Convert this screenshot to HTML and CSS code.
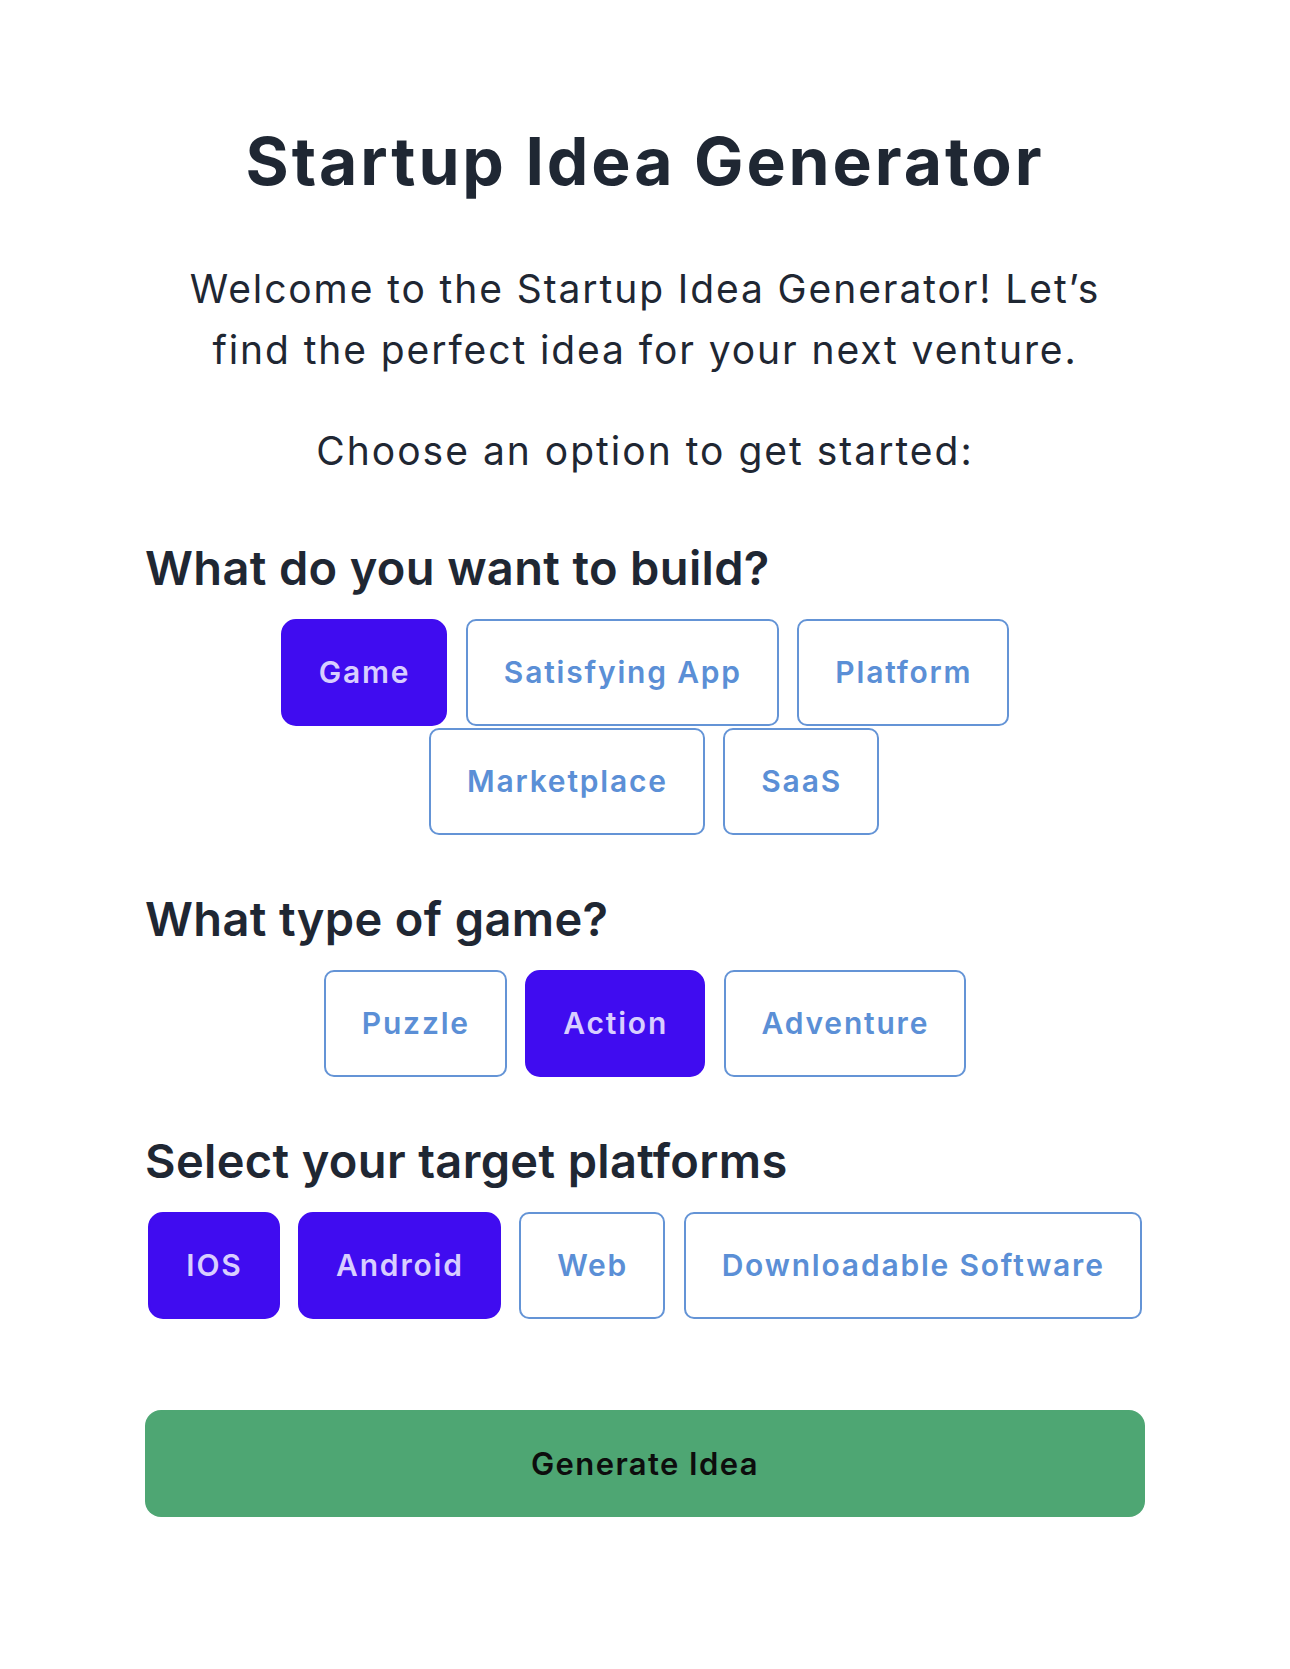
FILE: index.html
```html
<!DOCTYPE html>
<html lang="en">
<head>
<meta charset="utf-8">
<title>Startup Idea Generator</title>
<link rel="stylesheet" href="styles.css">
</head>
<body>
<main class="app">
  <h1 class="title">Startup Idea Generator</h1>
  <p class="intro">Welcome to the Startup Idea Generator! Let’s find the perfect idea for your next venture.</p>
  <p class="prompt">Choose an option to get started:</p>

  <section class="section">
    <h2 class="question">What do you want to build?</h2>
    <div class="options options-build">
      <button class="option selected">Game</button>
      <button class="option">Satisfying App</button>
      <button class="option">Platform</button>
      <button class="option">Marketplace</button>
      <button class="option">SaaS</button>
    </div>
  </section>

  <section class="section">
    <h2 class="question">What type of game?</h2>
    <div class="options">
      <button class="option">Puzzle</button>
      <button class="option selected">Action</button>
      <button class="option">Adventure</button>
    </div>
  </section>

  <section class="section">
    <h2 class="question">Select your target platforms</h2>
    <div class="options">
      <button class="option selected">IOS</button>
      <button class="option selected">Android</button>
      <button class="option">Web</button>
      <button class="option">Downloadable Software</button>
    </div>
  </section>

  <button class="generate">Generate Idea</button>
</main>
</body>
</html>
```

FILE: styles.css
```css
html, body {
  margin: 0;
  padding: 0;
  background: #ffffff;
}

body {
  font-family: "Inter", "Noto Sans", sans-serif;
  color: #1f2733;
}

.app {
  width: 1000px;
  margin: 0 auto;
  padding-top: 122px;
  padding-bottom: 100px;
  display: flex;
  flex-direction: column;
}

.title {
  margin: 0;
  font-size: 66px;
  line-height: 79px;
  font-weight: 700;
  letter-spacing: 2.9px;
  text-align: center;
  color: #1f2733;
}

.intro {
  margin: 57px auto 0;
  max-width: 940px;
  font-size: 39px;
  line-height: 61px;
  font-weight: 400;
  letter-spacing: 1.9px;
  text-align: center;
}

.prompt {
  margin: 40px 0 0;
  font-size: 39px;
  line-height: 61px;
  font-weight: 400;
  letter-spacing: 2px;
  text-align: center;
}

.section {
  margin-top: 56px;
}

.section:first-of-type {
  margin-top: 59px;
}

.question {
  margin: 0 0 23px;
  font-size: 47px;
  line-height: 56px;
  font-weight: 600;
  letter-spacing: 0.35px;
  color: #1f2733;
}

.options {
  display: flex;
  flex-wrap: wrap;
  justify-content: center;
  column-gap: 18.5px;
  row-gap: 2px;
}

.options-build .option:nth-child(4) {
  margin-left: 18px;
}

.option {
  font-family: inherit;
  font-size: 30px;
  line-height: 45px;
  font-weight: 600;
  letter-spacing: 1.8px;
  padding: 29px 35px 29px 36px;
  border: 2px solid #6494d6;
  border-radius: 10px;
  background: #ffffff;
  color: #5b8fd6;
  cursor: pointer;
}

.option.selected {
  background: #400cf0;
  border-color: #400cf0;
  color: #d8ceff;
  border-radius: 15px;
}

.generate {
  margin-top: 91px;
  width: 100%;
  height: 107px;
  border: none;
  border-radius: 16px;
  background: #4ea673;
  color: #0d0d0d;
  font-family: inherit;
  font-size: 31px;
  font-weight: 600;
  letter-spacing: 1.4px;
  cursor: pointer;
}
```
